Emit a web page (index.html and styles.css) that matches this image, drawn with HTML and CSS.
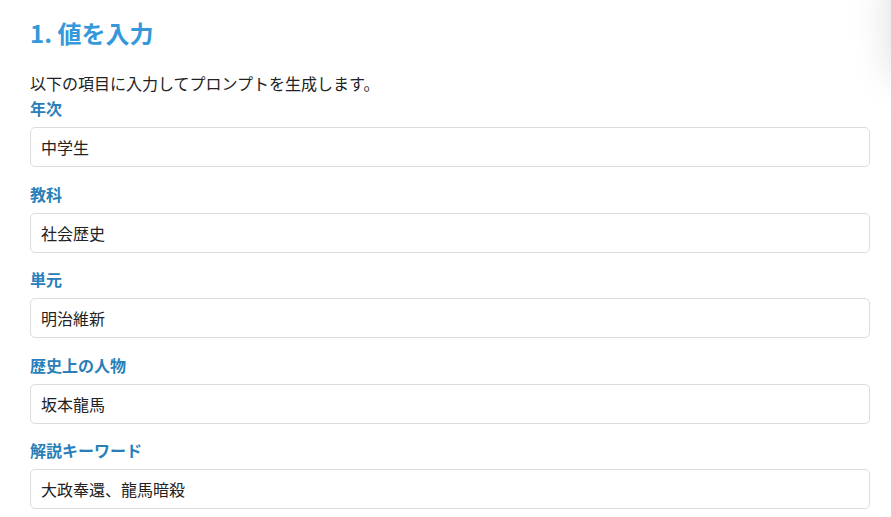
FILE: index.html
```html
<!DOCTYPE html>
<html lang="ja">
<head>
<meta charset="utf-8">
<title>値を入力</title>
<link rel="stylesheet" href="styles.css">
</head>
<body>
<div class="page">
  <h2 class="title">1. 値を入力</h2>
  <p class="desc">以下の項目に入力してプロンプトを生成します。</p>
  <div class="field">
    <label class="label" for="f1">年次</label>
    <input class="input" id="f1" type="text" value="中学生">
  </div>
  <div class="field">
    <label class="label" for="f2">教科</label>
    <input class="input" id="f2" type="text" value="社会歴史">
  </div>
  <div class="field">
    <label class="label" for="f3">単元</label>
    <input class="input" id="f3" type="text" value="明治維新">
  </div>
  <div class="field">
    <label class="label" for="f4">歴史上の人物</label>
    <input class="input" id="f4" type="text" value="坂本龍馬">
  </div>
  <div class="field">
    <label class="label" for="f5">解説キーワード</label>
    <input class="input" id="f5" type="text" value="大政奉還、龍馬暗殺">
  </div>
</div>
<div class="floating-shadow"></div>
</body>
</html>
```
FILE: styles.css
```css
html, body {
  margin: 0;
  padding: 0;
  background: #ffffff;
  overflow: hidden;
}
body {
  font-family: "Noto Sans CJK JP", "Noto Sans", sans-serif;
  color: #222222;
}
.page {
  padding: 18px 21px 0 30px;
  display: flex;
  flex-direction: column;
}
.title {
  margin: 0 0 24px 0;
  font-size: 24px;
  line-height: 29px;
  font-weight: 700;
  color: #3498db;
}
.desc {
  margin: 0 0 1px 0;
  font-size: 16px;
  line-height: 24px;
  color: #222222;
}
.field {
  display: flex;
  flex-direction: column;
  margin-bottom: 14.5px;
}
.label {
  font-size: 16px;
  line-height: 24px;
  font-weight: 700;
  color: #2980b9;
  margin-bottom: 7px;
}
.input {
  box-sizing: border-box;
  height: 40px;
  width: 100%;
  margin: 0;
  padding: 0 10px;
  border: 1px solid #dddddd;
  border-radius: 5px;
  font-family: "Noto Sans CJK JP", "Noto Sans", sans-serif;
  font-size: 16px;
  color: #222222;
  background: #ffffff;
  outline: none;
}
.floating-shadow {
  position: fixed;
  top: -40px;
  right: -70px;
  width: 70px;
  height: 120px;
  border-radius: 20px;
  background: #ffffff;
  box-shadow: 0 0 40px rgba(0, 0, 0, 0.14);
}
```
